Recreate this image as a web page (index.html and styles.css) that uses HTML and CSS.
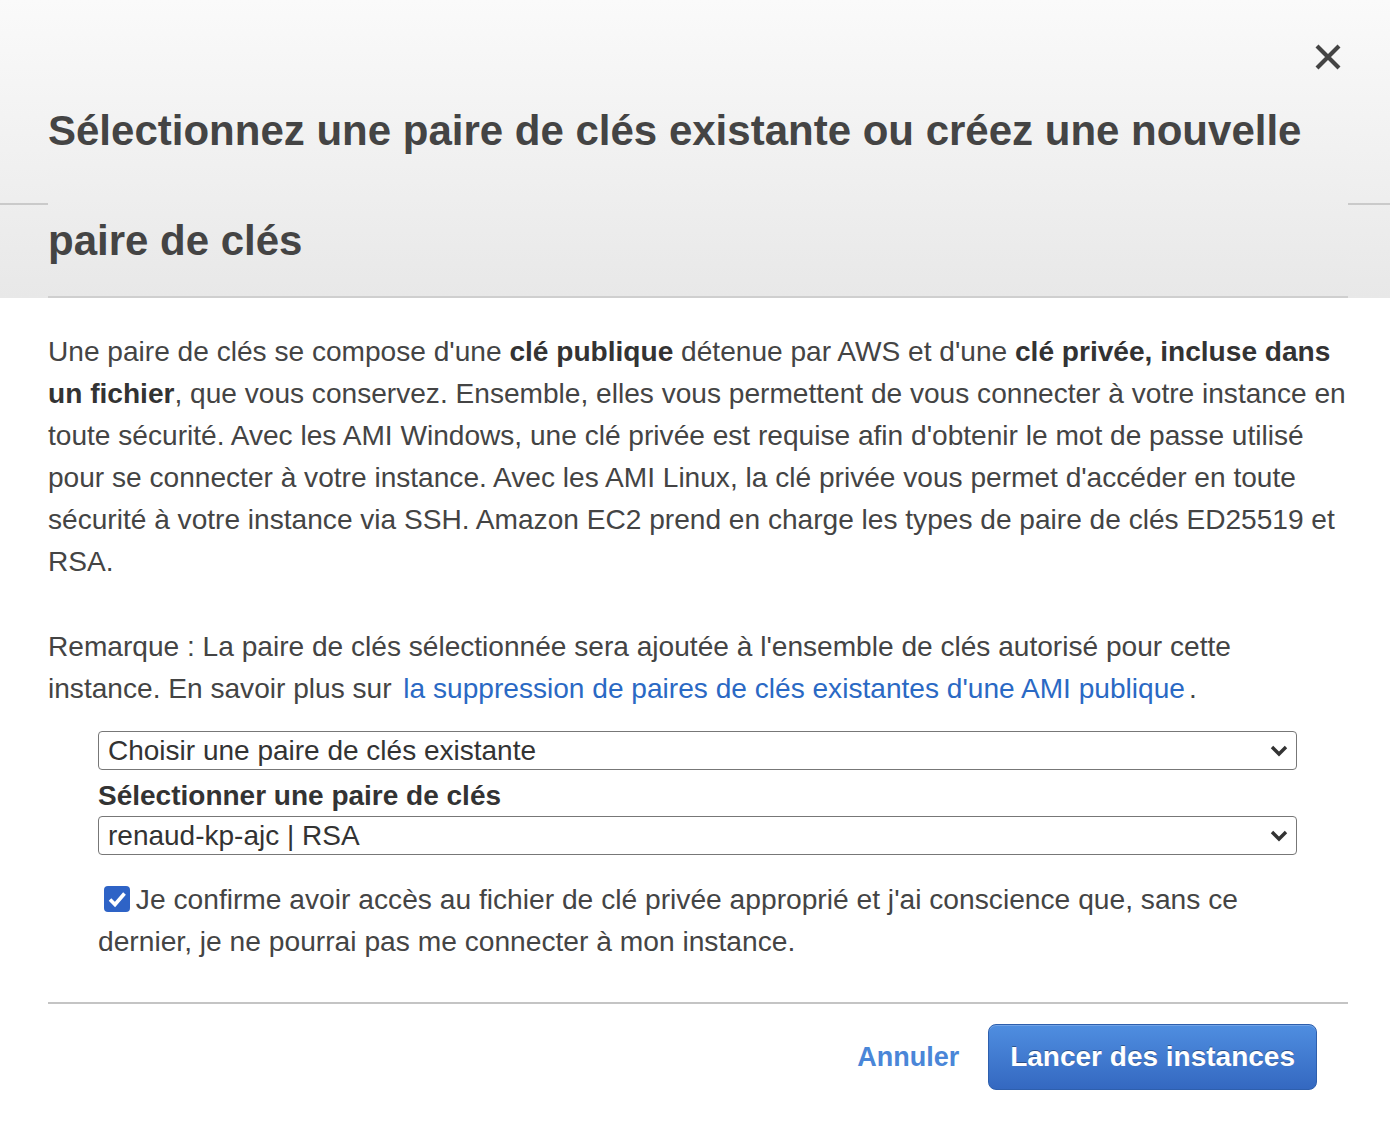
FILE: index.html
```html
<!DOCTYPE html>
<html lang="fr">
<head>
<meta charset="utf-8">
<title>Paire de clés</title>
<link rel="stylesheet" href="styles.css">
</head>
<body>
<div class="modal">
  <div class="modal-header">
    <button class="close" aria-label="Fermer">
      <svg width="28" height="28" viewBox="0 0 28 28"><path d="M3 3 L25 25 M25 3 L3 25" stroke="#444" stroke-width="4.2" stroke-linecap="butt" fill="none"/></svg>
    </button>
    <h2 class="title">Sélectionnez une paire de clés existante ou créez une nouvelle paire de clés</h2>
  </div>
  <div class="modal-body">
    <p class="para">Une paire de clés se compose d'une <b>clé publique</b> détenue par AWS et d'une <b>clé privée, incluse dans un fichier</b>, que vous conservez. Ensemble, elles vous permettent de vous connecter à votre instance en toute sécurité. Avec les AMI Windows, une clé privée est requise afin d'obtenir le mot de passe utilisé pour se connecter à votre instance. Avec les AMI Linux, la clé privée vous permet d'accéder en toute sécurité à votre instance via SSH. Amazon EC2 prend en charge les types de paire de clés ED25519 et RSA.</p>
    <p class="para">Remarque : La paire de clés sélectionnée sera ajoutée à l'ensemble de clés autorisé pour cette instance. En savoir plus sur <a class="link" href="#">la suppression de paires de clés existantes d'une AMI publique</a>.</p>
    <div class="form">
      <div class="select">
        <span>Choisir une paire de clés existante</span>
        <svg class="chev" width="18" height="12" viewBox="0 0 18 12"><path d="M2 2 L9 9 L16 2" stroke="#333" stroke-width="3.4" fill="none"/></svg>
      </div>
      <div class="label">Sélectionner une paire de clés</div>
      <div class="select">
        <span>renaud-kp-ajc | RSA</span>
        <svg class="chev" width="18" height="12" viewBox="0 0 18 12"><path d="M2 2 L9 9 L16 2" stroke="#333" stroke-width="3.4" fill="none"/></svg>
      </div>
      <p class="confirm"><span class="check"><svg width="26" height="26" viewBox="0 0 26 26"><rect x="0" y="0" width="26" height="26" rx="4" fill="#2e63c6"/><path d="M6 13.5 L11 18.5 L20.5 7.5" stroke="#fff" stroke-width="3.6" fill="none"/></svg></span> Je confirme avoir accès au fichier de clé privée approprié et j'ai conscience que, sans ce dernier, je ne pourrai pas me connecter à mon instance.</p>
    </div>
  </div>
  <div class="modal-footer">
    <a class="cancel" href="#">Annuler</a>
    <button class="primary">Lancer des instances</button>
  </div>
</div>
</body>
</html>
```

FILE: styles.css
```css
html, body {
  margin: 0;
  padding: 0;
  background: #fff;
}
body {
  font-family: "Liberation Sans", Arial, Helvetica, sans-serif;
  color: #444;
}
.modal {
  width: 1390px;
}
.modal-header {
  position: relative;
  background: linear-gradient(to bottom, #fafafa 0%, #e8e8e8 100%);
  padding: 0 42px 0 48px;
}
.modal-header::before,
.modal-header::after {
  content: "";
  position: absolute;
  top: 203px;
  height: 2px;
  background: #cacaca;
}
.modal-header::before { left: 0; width: 48px; }
.modal-header::after { right: 0; width: 42px; }
.close {
  position: absolute;
  z-index: 2;
  top: 43px;
  right: 48px;
  width: 28px;
  height: 28px;
  padding: 0;
  border: 0;
  background: transparent;
}
.close svg { display: block; }
.title {
  position: relative;
  z-index: 1;
  margin: 0;
  padding-top: 76px;
  height: 298px;
  box-sizing: border-box;
  font-size: 42px;
  line-height: 110px;
  font-weight: bold;
  color: #444;
  border-bottom: 2px solid #cfcfcf;
  background: linear-gradient(to bottom, #fafafa 0%, #e8e8e8 100%);
}
.modal-body {
  padding: 33px 42px 0 48px;
}
.para {
  margin: 0 0 43px;
  font-size: 28.1px;
  line-height: 42px;
}
.para b { font-weight: bold; color: #333; }
.link {
  color: #2a69c4;
  text-decoration: none;
  margin-left: 4px;
  margin-right: 4px;
}
.form {
  margin: -22px 51px 0 50px;
}
.select {
  height: 39px;
  border: 1.5px solid #777;
  border-radius: 4px;
  box-sizing: border-box;
  display: flex;
  align-items: center;
  justify-content: space-between;
  padding: 0 8px 0 9px;
  font-size: 28px;
  color: #333;
}
.chev { display: block; }
.label {
  font-size: 28px;
  font-weight: bold;
  padding-top: 6px;
  line-height: 40px;
  color: #333;
}
.confirm {
  margin: 23px 0 0;
  font-size: 28.2px;
  line-height: 42px;
  color: #444;
}
.check {
  display: inline-block;
  vertical-align: -3px;
  margin-left: 6px;
  margin-right: -2px;
}
.check svg { display: block; }
.modal-footer {
  margin: 40px 42px 0 48px;
  border-top: 2px solid #c4c4c4;
  display: flex;
  justify-content: flex-end;
  align-items: center;
  gap: 29px;
  padding: 20px 31px 0 0;
}
.cancel {
  font-size: 27px;
  font-weight: bold;
  color: #4a86d8;
  text-decoration: none;
}
.primary {
  height: 66px;
  padding: 0 21px;
  border: 1px solid #2e5fad;
  border-radius: 8px;
  background: linear-gradient(to bottom, #4f8ee0 0%, #3468c0 100%);
  color: #fff;
  font-family: "Liberation Sans", Arial, sans-serif;
  font-size: 28px;
  font-weight: bold;
  text-shadow: 0 -1px 0 rgba(0,0,0,0.35);
  box-shadow: inset 0 1px 0 rgba(255,255,255,0.2);
}
```
